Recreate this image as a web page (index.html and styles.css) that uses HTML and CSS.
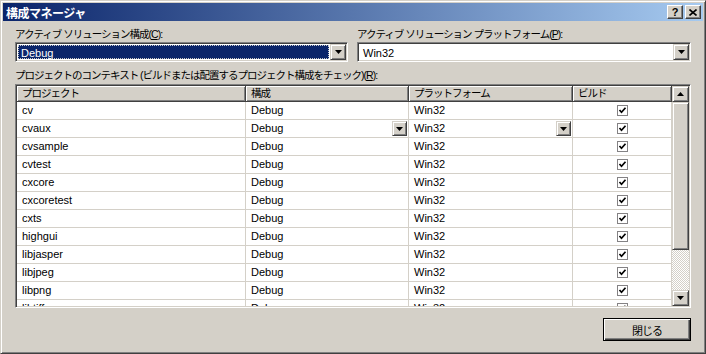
FILE: index.html
```html
<!DOCTYPE html>
<html lang="ja">
<head>
    <meta charset="UTF-8">
    <meta name="viewport" content="width=device-width, initial-scale=1.0">
    <title>構成マネージャ</title>
    <link rel="stylesheet" href="styles.css">
</head>
<body>
    <div class="window">
        <div class="titlebar">
            <span class="title">構成マネージャ</span>
            <span class="tbtn help">?</span>
            <span class="tbtn close">
                <svg width="8" height="7" viewBox="0 0 8 7"><path d="M0.5 0.5 L7.5 6.5 M7.5 0.5 L0.5 6.5" stroke="#000" stroke-width="1.6"/></svg>
            </span>
        </div>

        <div class="content">
            <div class="top-fields">
                <div class="field">
                    <label class="lbl ja">アクティブ&nbsp;ソリューション構成(<u>C</u>):</label>
                    <div class="combo">
                        <div class="combo-value selected">Debug</div>
                        <span class="drop-btn"><svg width="7" height="4" viewBox="0 0 7 4"><path d="M0 0 H7 L3.5 4 Z" fill="#000"/></svg></span>
                    </div>
                </div>
                <div class="field">
                    <label class="lbl ja">アクティブ&nbsp;ソリューション&nbsp;プラットフォーム(<u>P</u>):</label>
                    <div class="combo">
                        <div class="combo-value">Win32</div>
                        <span class="drop-btn"><svg width="7" height="4" viewBox="0 0 7 4"><path d="M0 0 H7 L3.5 4 Z" fill="#000"/></svg></span>
                    </div>
                </div>
            </div>

            <div class="lbl ja ctx-label">プロジェクトのコンテキスト&nbsp;(ビルドまたは配置するプロジェクト構成をチェック)(<u>R</u>):</div>

            <div class="grid-box">
                <div class="grid">
                    <div class="row head">
                        <div class="hcell ja">プロジェクト</div>
                        <div class="hcell ja">構成</div>
                        <div class="hcell ja">プラットフォーム</div>
                        <div class="hcell ja">ビルド</div>
                    </div>
                    <div class="rows" id="rows"></div>
                </div>
                <div class="vscroll">
                    <span class="sbtn"><svg width="7" height="4" viewBox="0 0 7 4"><path d="M0 4 H7 L3.5 0 Z" fill="#000"/></svg></span>
                    <span class="thumb"></span>
                    <span class="track"></span>
                    <span class="sbtn"><svg width="7" height="4" viewBox="0 0 7 4"><path d="M0 0 H7 L3.5 4 Z" fill="#000"/></svg></span>
                </div>
            </div>

            <div class="footer">
                <button class="btn default ja">閉じる</button>
            </div>
        </div>
    </div>

    <script>
        const projects = ['cv', 'cvaux', 'cvsample', 'cvtest', 'cxcore', 'cxcoretest', 'cxts',
                          'highgui', 'libjasper', 'libjpeg', 'libpng', 'libtiff'];
        const arrow = '<span class="mini-drop"><svg width="7" height="4" viewBox="0 0 7 4"><path d="M0 0 H7 L3.5 4 Z" fill="#000"/></svg></span>';
        const check = '<span class="check"><svg width="9" height="9" viewBox="0 0 9 9"><path d="M1.5 4 L3.5 6.2 L7.5 1.8" stroke="#000" stroke-width="1.7" fill="none"/></svg></span>';

        const rows = document.getElementById('rows');
        projects.forEach(function (name) {
            const drop = name === 'cvaux';
            const row = document.createElement('div');
            row.className = 'row';
            row.innerHTML =
                '<div class="cell">' + name + '</div>' +
                '<div class="cell' + (drop ? ' has-drop' : '') + '"><span>Debug</span>' + (drop ? arrow : '') + '</div>' +
                '<div class="cell' + (drop ? ' has-drop' : '') + '"><span>Win32</span>' + (drop ? arrow : '') + '</div>' +
                '<div class="cell center">' + check + '</div>';
            rows.appendChild(row);
        });
    </script>
</body>
</html>
```

FILE: styles.css
```css
body {
    margin: 0;
    font-family: "Liberation Sans", "Noto Sans CJK JP", sans-serif;
    font-size: 11px;
    color: #000;
    background: #d4d0c8;
}

.ja {
    font-size: 10.5px;
    letter-spacing: -1px;
}

.window {
    width: 706px;
    height: 354px;
    box-sizing: border-box;
    background: #d4d0c8;
    border: 1px solid;
    border-color: #d4d0c8 #404040 #404040 #d4d0c8;
    box-shadow: inset 1px 1px #fff, inset -1px -1px #808080;
    padding: 2px;
    display: flex;
    flex-direction: column;
}

/* title bar */
.titlebar {
    height: 18px;
    display: flex;
    align-items: center;
    padding: 0 2px 0 3px;
    background: linear-gradient(to right, #0a246a, #a6caf0);
}

.title {
    flex: 1;
    color: #fff;
    font-weight: bold;
    font-size: 12px;
    letter-spacing: -0.5px;
}

.tbtn {
    width: 16px;
    height: 14px;
    box-sizing: border-box;
    margin-left: 2px;
    display: flex;
    align-items: center;
    justify-content: center;
    background: #d4d0c8;
    border: 1px solid;
    border-color: #fff #404040 #404040 #fff;
    box-shadow: inset -1px -1px #808080;
    font-weight: bold;
    font-size: 11px;
    font-family: "Liberation Sans", sans-serif;
    line-height: 12px;
}

/* dialog body */
.content {
    flex: 1;
    padding: 6px 12px 0 12px;
    display: flex;
    flex-direction: column;
}

.top-fields {
    display: grid;
    grid-template-columns: 333px 1fr;
    column-gap: 9px;
}

.lbl {
    display: block;
    height: 14px;
    line-height: 14px;
    margin-bottom: 1px;
    white-space: nowrap;
}

.combo {
    height: 20px;
    box-sizing: border-box;
    border: 1px solid;
    border-color: #808080 #fff #fff #808080;
    box-shadow: inset 1px 1px #404040, inset -1px -1px #d4d0c8;
    background: #fff;
    padding: 2px 1px 2px 2px;
    display: flex;
}

.combo-value {
    flex: 1;
    line-height: 14px;
    padding-left: 2px;
    border: 1px solid transparent;
    margin-right: 1px;
}

.combo-value.selected {
    background: #0a246a;
    color: #fff;
    border: 1px dotted #c8c8c8;
}

.drop-btn,
.mini-drop,
.sbtn {
    box-sizing: border-box;
    display: flex;
    align-items: center;
    justify-content: center;
    background: #d4d0c8;
    border: 1px solid;
    border-color: #d4d0c8 #404040 #404040 #d4d0c8;
    box-shadow: inset 1px 1px #fff, inset -1px -1px #808080;
}

.drop-btn {
    width: 16px;
    height: 16px;
    margin-top: -1px;
}

.ctx-label {
    margin-top: 6px;
    margin-bottom: 2px;
}

/* project grid */
.grid-box {
    height: 224px;
    box-sizing: border-box;
    border: 1px solid;
    border-color: #808080 #fff #fff #808080;
    box-shadow: inset 1px 1px #404040, inset -1px -1px #d4d0c8;
    padding: 1px;
    display: flex;
    background: #fff;
}

.grid {
    width: 655px;
    overflow: hidden;
}

.row {
    display: grid;
    grid-template-columns: 229px 163px 164px 99px;
    height: 18px;
}

.row.head {
    height: 16px;
}

.hcell {
    box-sizing: border-box;
    background: #d4d0c8;
    border-right: 1px solid #404040;
    border-bottom: 1px solid #404040;
    box-shadow: inset 1px 1px #fff, inset -1px -1px #808080;
    padding-left: 5px;
    line-height: 15px;
    white-space: nowrap;
}

.cell {
    box-sizing: border-box;
    border-right: 1px solid #d4d0c8;
    border-bottom: 1px solid #d4d0c8;
    padding-left: 5px;
    line-height: 17px;
    white-space: nowrap;
}

.cell.has-drop {
    display: flex;
    justify-content: space-between;
    align-items: center;
    padding-right: 1px;
}

.cell.center {
    display: flex;
    justify-content: center;
    align-items: center;
    padding-left: 0;
}

.mini-drop {
    width: 15px;
    height: 15px;
}

.check {
    width: 11px;
    height: 11px;
    box-sizing: border-box;
    border: 1px solid #848284;
    display: flex;
    align-items: center;
    justify-content: center;
    background: #fff;
}

/* scrollbar */
.vscroll {
    width: 17px;
    display: flex;
    flex-direction: column;
}

.sbtn {
    height: 16px;
    flex: none;
}

.thumb {
    height: 148px;
    box-sizing: border-box;
    background: #d4d0c8;
    border: 1px solid;
    border-color: #d4d0c8 #404040 #404040 #d4d0c8;
    box-shadow: inset 1px 1px #fff, inset -1px -1px #808080;
}

.track {
    flex: 1;
    background: repeating-conic-gradient(#fff 0 25%, #d4d0c8 0 50%) 0 0 / 2px 2px;
}

/* footer */
.footer {
    display: flex;
    justify-content: flex-end;
    margin-top: 10px;
}

.btn {
    width: 88px;
    height: 23px;
    font-family: inherit;
    font-size: 11px;
    background: #d4d0c8;
    border: 1px solid #000;
    box-shadow: inset 1px 1px #fff, inset -1px -1px #404040, inset -2px -2px #808080;
    padding: 0;
}
```
